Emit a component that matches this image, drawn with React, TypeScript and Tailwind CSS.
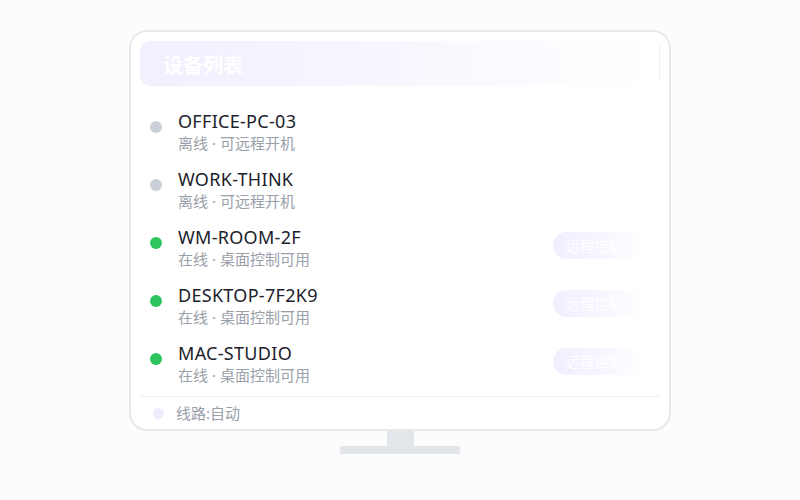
const devices = [
  { name: 'OFFICE-PC-03', online: false },
  { name: 'WORK-THINK', online: false },
  { name: 'WM-ROOM-2F', online: true },
  { name: 'DESKTOP-7F2K9', online: true },
  { name: 'MAC-STUDIO', online: true },
]

const font = { fontFamily: '"Noto Sans", "Noto Sans CJK SC", sans-serif' }

export default function App() {
  return (
    <div className="w-[800px] h-[500px] bg-[#fcfcfd] flex flex-col items-center pt-[30px]" style={font}>
      {/* monitor */}
      <div className="w-[542px] h-[401px] bg-white border-2 border-[#e6e8ec] rounded-[18px] px-[9px] pt-[9px] flex flex-col">
        <div className="relative h-[45px] rounded-[10px] bg-gradient-to-r from-[#f2efff] via-[#f8f7ff] to-white flex items-center pl-[23px] pt-[4px]">
          <span className="text-white text-[20px] font-bold leading-none">设备列表</span>
          <div className="absolute right-[0px] top-[4px] h-[36px] w-px bg-[#f0f1f4]" />
        </div>

        <div className="flex flex-col gap-[14px] pt-[24px] pl-[10px] pr-[17px]">
          {devices.map((d) => (
            <div key={d.name} className="flex items-start h-[44px]">
              <div
                className={
                  'w-[12px] h-[12px] rounded-full mt-[11px] ' +
                  (d.online ? 'bg-[#2ec55e]' : 'bg-[#cbd0d8]')
                }
              />
              <div className="ml-[16px] flex flex-col flex-1">
                <span className="text-[18px] leading-[22px] text-[#1c212b] tracking-[0.3px]">{d.name}</span>
                <span className="text-[15px] leading-[22px] text-[#9aa0aa] flex">
                  <span>{d.online ? '在线' : '离线'}</span>
                  <span className="mx-[4px]">·</span>
                  <span>{d.online ? '桌面控制可用' : '可远程开机'}</span>
                </span>
              </div>
              {d.online && (
                <div className="mt-[6px] h-[27px] w-[90px] rounded-full bg-gradient-to-r from-[#f1efff] via-[#f6f5ff] to-white flex items-center pl-[13px]">
                  <span className="text-white text-[14px] leading-none">远程控制</span>
                </div>
              )}
            </div>
          ))}
        </div>

        <div className="mt-[10px] border-t border-[#eef0f3] flex items-center h-[33px] pl-[13px]">
          <div className="w-[11px] h-[11px] rounded-full bg-[#eeebff]" />
          <span className="ml-[12px] text-[15px] text-[#9aa0aa]">线路:自动</span>
        </div>
      </div>
      {/* stand */}
      <div className="w-[27px] h-[15px] bg-[#e2e5e9]" />
      <div className="w-[120px] h-[8px] bg-[#e2e5e9]" />
    </div>
  )
}
